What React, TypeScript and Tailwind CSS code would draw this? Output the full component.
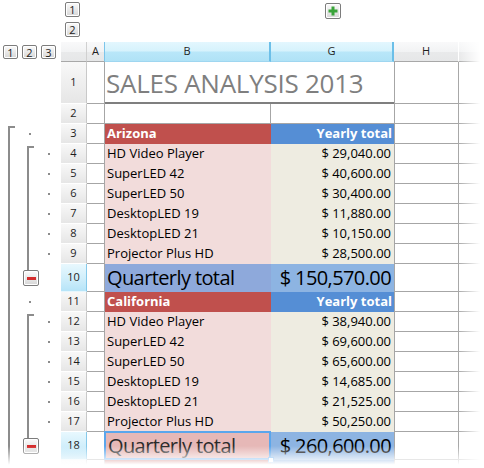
import React from "react";

type Kind = "none" | "l1start" | "l1" | "l2start" | "l2" | "l2end" | "tail";

const arizona = [
  ["HD Video Player", "$ 29,040.00"],
  ["SuperLED 42", "$ 40,600.00"],
  ["SuperLED 50", "$ 30,400.00"],
  ["DesktopLED 19", "$ 11,880.00"],
  ["DesktopLED 21", "$ 10,150.00"],
  ["Projector Plus HD", "$ 28,500.00"],
];

const california = [
  ["HD Video Player", "$ 38,940.00"],
  ["SuperLED 42", "$ 69,600.00"],
  ["SuperLED 50", "$ 65,600.00"],
  ["DesktopLED 19", "$ 14,685.00"],
  ["DesktopLED 21", "$ 21,525.00"],
  ["Projector Plus HD", "$ 50,250.00"],
];

const btn =
  "flex shrink-0 items-center justify-center rounded-[2px] border border-[#7c7c7c] bg-[linear-gradient(to_bottom,#fbfbfb,#e9e9e9_50%,#d6d6d6)] shadow-[inset_0_0_0_1px_#ffffff] text-[11px] leading-none text-[#1a1a1a]";

function LevelBtn({ label, h = "h-[15px]" }: { label: string; h?: string }) {
  return <div className={`${btn} ${h} w-[15px]`}>{label}</div>;
}

function MinusBtn() {
  return (
    <div className={`${btn} ml-[4px] h-[16px] w-[16px]`}>
      <div className="h-[3px] w-[9px] bg-[#d42c2c]" />
    </div>
  );
}

function Dot() {
  return <div className="h-[2px] w-[2px] bg-[#8c8c8c]" />;
}

function Gutter({ kind }: { kind: Kind }) {
  const full = <div className="ml-[8px] w-[2px] flex-1 bg-[#8c8c8c]" />;
  const start = (
    <div className="ml-[8px] mt-[2px] w-[7px] flex-1 border-l-2 border-t-2 border-[#8c8c8c]" />
  );
  let c1: React.ReactNode = null;
  let c2: React.ReactNode = null;
  let c3: React.ReactNode = null;

  if (kind === "l1start") c1 = start;
  else if (kind !== "none") c1 = full;

  if (kind === "l1start" || kind === "l1")
    c2 = (
      <div className="flex flex-1 items-center pl-[10px]">
        <Dot />
      </div>
    );
  if (kind === "l2start") c2 = start;
  if (kind === "l2") c2 = full;
  if (kind === "l2end")
    c2 = (
      <>
        <div className="ml-[8px] h-[6px] w-[2px] bg-[#8c8c8c]" />
        <MinusBtn />
      </>
    );

  if (kind === "l2start" || kind === "l2")
    c3 = (
      <div className="flex flex-1 items-center pl-[10px]">
        <Dot />
      </div>
    );

  return (
    <div className="flex h-full w-[61px] shrink-0">
      <div className="flex h-full w-[19px] flex-col">{c1}</div>
      <div className="flex h-full w-[19px] flex-col">{c2}</div>
      <div className="flex h-full w-[23px] flex-col">{c3}</div>
    </div>
  );
}

function Row({
  h,
  kind,
  num,
  sel = false,
  children,
}: {
  h: string;
  kind: Kind;
  num: string;
  sel?: boolean;
  children: React.ReactNode;
}) {
  return (
    <div className={`flex ${h} shrink-0`}>
      <Gutter kind={kind} />
      <div
        className={`flex w-[26px] shrink-0 items-center justify-center border-b border-r text-[11px] text-[#1e1e1e] ${
          sel
            ? "border-b-[#e6f6fd] border-r-[#86c9ea] bg-[linear-gradient(to_bottom,#e8f8fe,#d2effb_50%,#b6e4f8)]"
            : "border-b-white border-r-[#c9c9c9] bg-[linear-gradient(to_bottom,#f8f8f8,#e6e6e6)]"
        }`}
      >
        {num}
      </div>
      <div className="w-[18px] shrink-0 border-b border-r border-[#a6a6a6]" />
      {children}
      <div className="w-[65px] shrink-0 border-b border-l border-r border-[#a6a6a6]" />
      <div className="flex-1 border-b border-[#a6a6a6]" />
    </div>
  );
}

function StateHeader({ name }: { name: string }) {
  return (
    <>
      <div className="flex w-[166px] shrink-0 items-center bg-[#c0504d] pl-[2px] text-[13px] font-bold text-white">
        {name}
      </div>
      <div className="flex w-[123px] shrink-0 items-center justify-end bg-[#558ed5] pr-[2px] text-[13px] font-bold text-white">
        {name ? "Yearly total" : ""}
      </div>
    </>
  );
}

function Product({ name, value }: { name: string; value: string }) {
  return (
    <>
      <div className="flex w-[166px] shrink-0 items-center bg-[#f2dcdb] pl-[2px] text-[13px] text-black">
        {name}
      </div>
      <div className="flex w-[123px] shrink-0 items-center justify-end bg-[#eeece1] pr-[3px] text-[13px] text-black">
        {value}
      </div>
    </>
  );
}

function Group({ state, items, total, first, selected }: {
  state: string;
  items: string[][];
  total: string;
  first: number;
  selected?: boolean;
}) {
  return (
    <>
      <Row h="h-[20px]" kind={first === 3 ? "l1start" : "l1"} num={String(first)}>
        <StateHeader name={state} />
      </Row>
      {items.map(([name, value], i) => (
        <Row key={name} h="h-[20px]" kind={i === 0 ? "l2start" : "l2"} num={String(first + 1 + i)}>
          <Product name={name} value={value} />
        </Row>
      ))}
      <Row h="h-[28px]" kind="l2end" num={String(first + 7)} sel>
        {selected ? (
          <div className="relative flex w-[166px] shrink-0 items-center bg-[#e6b8b7] pl-[3px] text-[20px] tracking-[-0.03em] text-[#2a2a2a]">
            Quarterly total
            <div className="absolute -left-[1px] -top-[1px] bottom-0 right-0 border-2 border-[#5aa6ec]" />
            <div className="absolute -bottom-[3px] -right-[3px] h-[6px] w-[6px] border border-[#5aa6ec] bg-white" />
          </div>
        ) : (
          <div className="flex w-[166px] shrink-0 items-center bg-[#8ea9db] pl-[2px] text-[20px] tracking-[-0.03em] text-black">
            Quarterly total
          </div>
        )}
        <div className="flex w-[123px] shrink-0 items-center justify-end bg-[#8db4e2] pr-[3px] text-[20px] tracking-[-0.03em] text-black">
          {total}
        </div>
      </Row>
    </>
  );
}

export default function App() {
  const hdrGray =
    "bg-[linear-gradient(to_bottom,#f9f9fa,#f2f3f4_50%,#e9eaeb_51%,#e6e7e8)] border-b border-[#a8a8a8]";
  const hdrBlue =
    "bg-[linear-gradient(to_bottom,#e3f7fe,#d6f2fc_48%,#b9e7f9_52%,#b0e2f6)] border-b border-[#9fd6f0]";

  return (
    <div className="relative flex h-[468px] w-[484px] flex-col overflow-hidden bg-white font-['Open_Sans','Noto_Sans',sans-serif]">
      {/* column outline buttons */}
      <div className="flex h-[42px] shrink-0">
        <div className="w-[61px] shrink-0" />
        <div className="flex w-[26px] shrink-0 flex-col gap-[5px] pl-[4px] pt-[2px]">
          <LevelBtn label="1" />
          <LevelBtn label="2" />
        </div>
        <div className="w-[184px] shrink-0" />
        <div className="flex w-[123px] shrink-0 justify-center pt-[3px]">
          <div className={`${btn} h-[16px] w-[16px]`}>
            <svg width="10" height="10" viewBox="0 0 10 10">
              <rect x="3.5" y="0.5" width="3" height="9" fill="#3aa43a" />
              <rect x="0.5" y="3.5" width="9" height="3" fill="#3aa43a" />
            </svg>
          </div>
        </div>
      </div>

      {/* column headers */}
      <div className="flex h-[20px] shrink-0 text-[11px] text-[#1e1e1e]">
        <div className="flex w-[61px] shrink-0 items-center gap-[4px] pl-[3px]">
          <LevelBtn label="1" h="h-[14px]" />
          <LevelBtn label="2" h="h-[14px]" />
          <LevelBtn label="3" h="h-[14px]" />
        </div>
        <div className={`w-[26px] shrink-0 border-r border-r-[#d0d0d0] ${hdrGray}`} />
        <div className={`flex w-[18px] shrink-0 items-center justify-center border-r border-r-[#7cc5ea] ${hdrGray}`}>
          A
        </div>
        <div className={`flex w-[166px] shrink-0 items-center justify-center border-r-2 border-r-[#6cbfe8] ${hdrBlue}`}>
          B
        </div>
        <div className={`flex w-[123px] shrink-0 items-center justify-center border-r-2 border-r-[#6cbfe8] ${hdrBlue}`}>
          G
        </div>
        <div className={`flex w-[65px] shrink-0 items-center justify-center border-r border-r-white ${hdrGray}`}>
          H
        </div>
        <div className={`flex-1 ${hdrGray}`} />
      </div>

      <Row h="h-[42px]" kind="none" num="1">
        <div className="flex w-[289px] shrink-0 items-center border-b-2 border-[#7f7f7f] pl-[1px] pt-[2px] text-[26px] tracking-[-0.01em] text-[#7f7f7f]">
          SALES ANALYSIS 2013
        </div>
      </Row>
      <Row h="h-[20px]" kind="none" num="2">
        <div className="w-[166px] shrink-0 border-b border-r border-[#a6a6a6]" />
        <div className="w-[123px] shrink-0 border-b border-[#a6a6a6]" />
      </Row>

      <Group state="Arizona" items={arizona} total="$ 150,570.00" first={3} />
      <Group state="California" items={california} total="$ 260,600.00" first={11} selected />

      <Row h="h-[20px]" kind="tail" num="">
        <StateHeader name="" />
      </Row>

      {/* fades at the edges */}
      <div className="pointer-events-none absolute bottom-0 left-0 right-0 h-[22px] bg-[linear-gradient(to_bottom,rgba(255,255,255,0),rgba(255,255,255,0.6)_50%,#ffffff_85%)]" />
      <div className="pointer-events-none absolute bottom-0 right-0 top-[42px] w-[26px] bg-[linear-gradient(to_right,rgba(255,255,255,0),#ffffff_85%)]" />
    </div>
  );
}
